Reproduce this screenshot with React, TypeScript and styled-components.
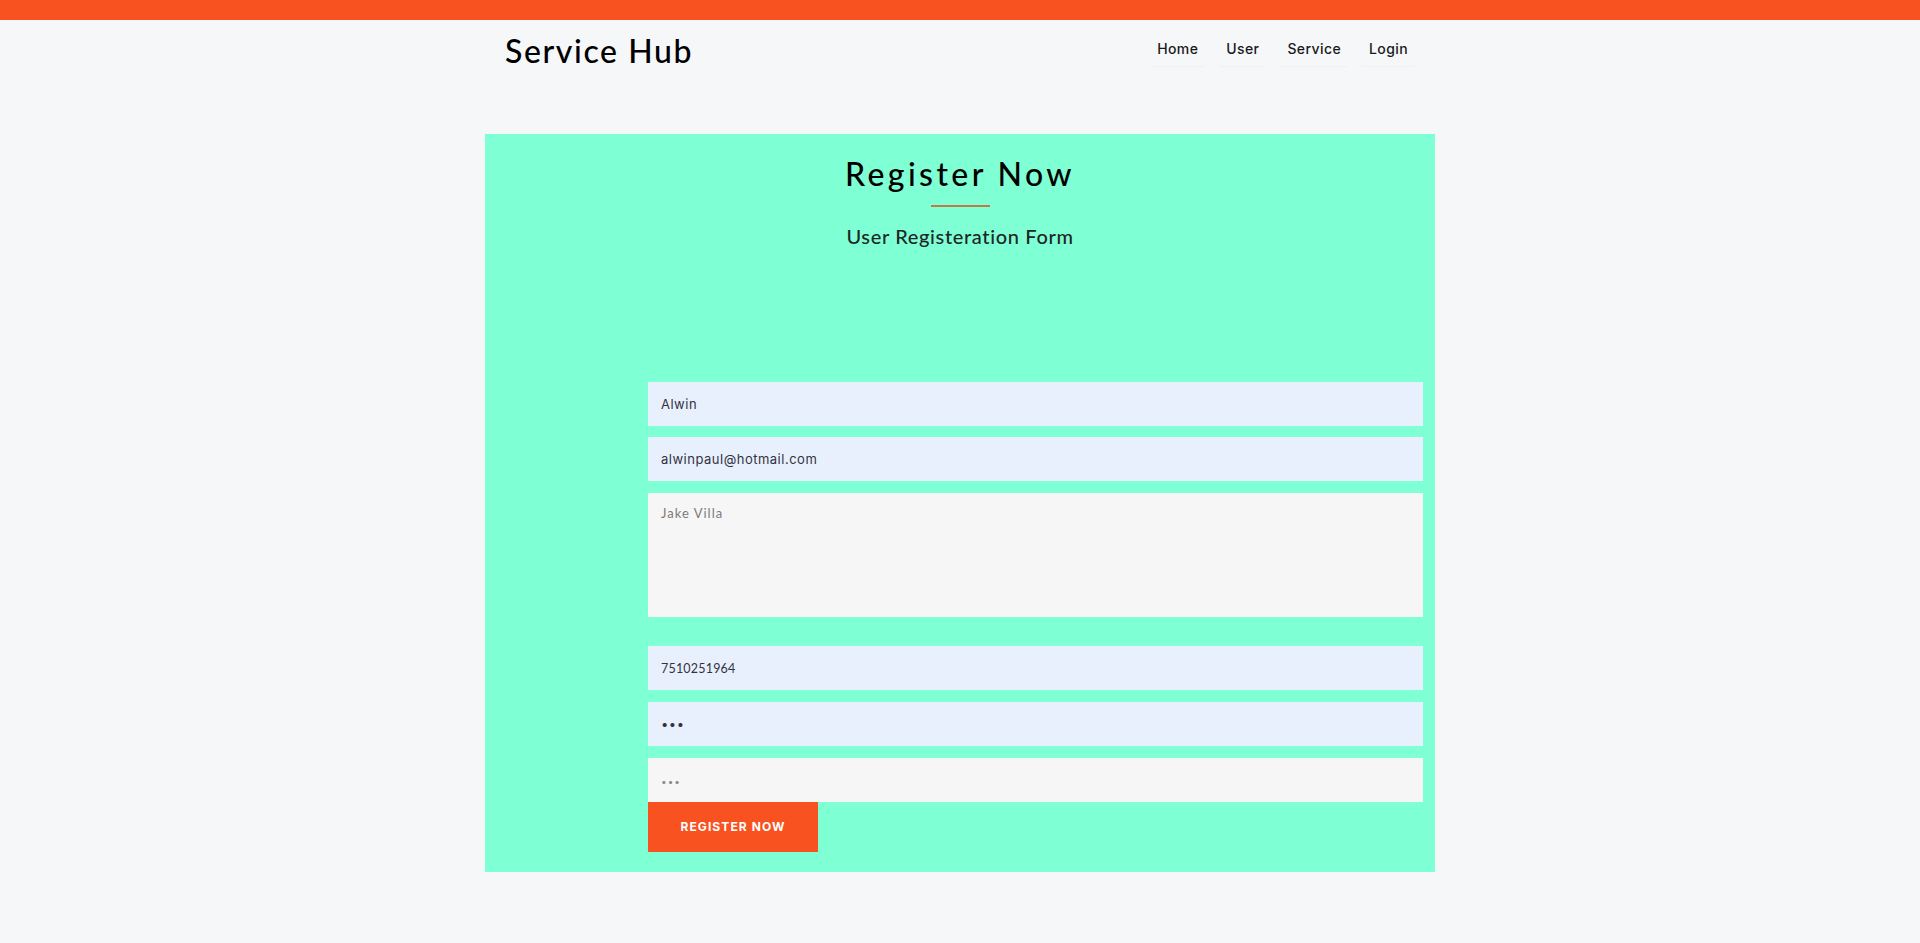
import React from "react";
import styled, { createGlobalStyle } from "styled-components";

const GlobalStyle = createGlobalStyle`
  html, body {
    margin: 0;
    padding: 0;
    background: #f6f7f9;
    font-family: "Lato", "Liberation Sans", sans-serif;
  }
  * { box-sizing: border-box; }
`;

const TopBar = styled.div`
  height: 20px;
  background: #f75220;
`;

const Header = styled.header`
  width: 950px;
  height: 114px;
  margin: 0 auto;
  padding: 0 20px;
  display: flex;
  justify-content: space-between;
  align-items: flex-start;
`;

const Logo = styled.a`
  margin-top: 15px;
  font-family: "Lato", "Liberation Sans", sans-serif;
  font-size: 32px;
  line-height: 32px;
  font-weight: 500;
  color: #000;
  text-decoration: none;
  letter-spacing: 1.6px;
`;

const Nav = styled.nav`
  margin-top: 19px;
  display: flex;
  gap: 14px;
`;

const NavLink = styled.a`
  padding: 0 7px 7px;
  font-family: "Inter", "Liberation Sans", sans-serif;
  font-size: 14px;
  line-height: 20px;
  font-weight: 500;
  letter-spacing: 0.4px;
  color: #1a1a1a;
  text-decoration: none;
  border-bottom: 1px solid rgba(0, 0, 0, 0.025);
`;

const Panel = styled.section`
  width: 950px;
  margin: 0 auto;
  background: #7fffd4;
  padding: 21px 12px 20px;
  display: flex;
  flex-direction: column;
`;

const Title = styled.h2`
  margin: 0;
  text-align: center;
  font-family: "Lato", "Liberation Sans", sans-serif;
  font-size: 32px;
  line-height: 38.4px;
  font-weight: 500;
  letter-spacing: 3.4px;
  color: #000;
`;

const Rule = styled.div`
  width: 59px;
  height: 2px;
  margin: 12px auto 0;
  background: #c07a45;
`;

const Subtitle = styled.p`
  margin: 17px 0 0;
  text-align: center;
  font-family: "Lato", "Liberation Sans", sans-serif;
  font-size: 20px;
  line-height: 24px;
  font-weight: 500;
  letter-spacing: 0.65px;
  color: #1c2626;
`;

const Form = styled.form`
  margin: 134px 0 0 151px;
  display: flex;
  flex-direction: column;
`;

const fieldBase = `
  display: block;
  width: 100%;
  border: none;
  outline: none;
  padding: 0 13px;
  font-size: 13px;
  resize: none;
`;

const Field = styled.input<{ $gap: number; $filled?: boolean; $alt?: boolean }>`
  ${fieldBase}
  height: 44px;
  margin-top: ${(p) => p.$gap}px;
  background: ${(p) => (p.$filled ? "#e8f0fe" : "#f6f6f6")};
  font-family: ${(p) =>
    p.$alt ? '"Lato", "Liberation Sans", sans-serif' : '"Inter", "Liberation Sans", sans-serif'};
  font-size: ${(p) => (p.$alt ? "12.5px" : "13px")};
  letter-spacing: ${(p) => (p.$alt ? "0.2px" : "0.5px")};
  color: #33333d;
  &::placeholder {
    color: #8a8a8a;
    font-size: 10px;
    letter-spacing: 1px;
  }
`;

const Area = styled.textarea`
  ${fieldBase}
  height: 124px;
  margin-top: 12px;
  padding-top: 11px;
  background: #f6f6f6;
  font-family: "Lato", "Liberation Sans", sans-serif;
  letter-spacing: 1px;
  line-height: 18px;
  &::placeholder {
    color: #7b7b7b;
  }
`;

const Submit = styled.button`
  width: 170px;
  height: 50px;
  border: none;
  padding: 0 0 2px;
  background: #f75220;
  color: #fff;
  font-family: "Inter", "Liberation Sans", sans-serif;
  font-size: 12px;
  font-weight: 700;
  letter-spacing: 1.1px;
  text-transform: uppercase;
  cursor: pointer;
`;

export default function App() {
  return (
    <>
      <GlobalStyle />
      <TopBar />
      <Header>
        <Logo href="#">Service Hub</Logo>
        <Nav>
          <NavLink href="#">Home</NavLink>
          <NavLink href="#">User</NavLink>
          <NavLink href="#">Service</NavLink>
          <NavLink href="#">Login</NavLink>
        </Nav>
      </Header>
      <Panel>
        <Title>Register Now</Title>
        <Rule />
        <Subtitle>User Registeration Form</Subtitle>
        <Form onSubmit={(e) => e.preventDefault()}>
          <Field $gap={0} $filled defaultValue="Alwin" />
          <Field $gap={11} $filled defaultValue="alwinpaul@hotmail.com" />
          <Area placeholder="Jake Villa" />
          <Field $gap={29} $filled $alt defaultValue="7510251964" />
          <Field $gap={12} $filled type="password" defaultValue="123" />
          <Field $gap={12} type="password" placeholder="•••" />
          <Submit type="submit">Register Now</Submit>
        </Form>
      </Panel>
    </>
  );
}
